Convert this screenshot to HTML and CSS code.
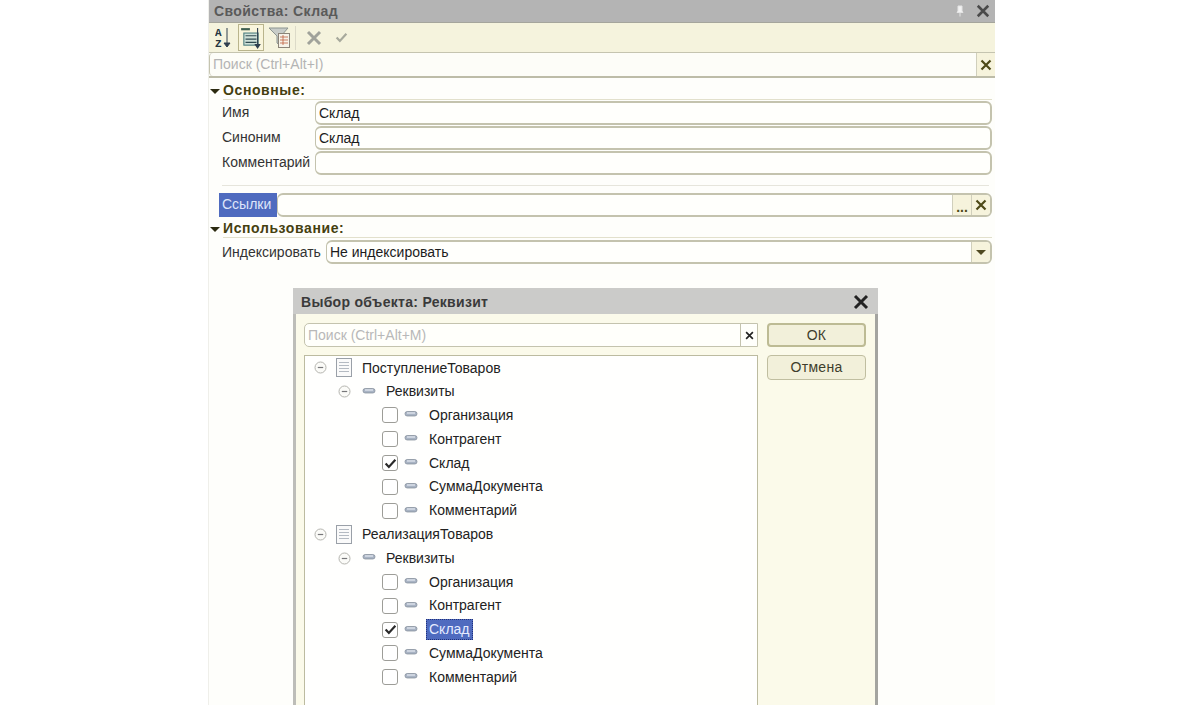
FILE: index.html
```html
<!DOCTYPE html>
<html lang="ru">
<head>
<meta charset="utf-8">
<title>Свойства: Склад</title>
<link rel="stylesheet" href="styles.css">
</head>
<body>
<svg class="defs" aria-hidden="true">
  <symbol id="x" viewBox="0 0 12 12"><path d="M1.5 1.5 10.5 10.5M10.5 1.5 1.5 10.5" fill="none" stroke="currentColor" stroke-width="2.2"/></symbol>
  <symbol id="attr" viewBox="0 0 14 8"><rect x="1" y="1.5" width="12" height="4.5" rx="2.2" fill="#a9b4c4" stroke="#7d8794" stroke-width=".7"/><rect x="3" y="2.4" width="8" height="1.2" fill="#e4e9f0"/></symbol>
  <symbol id="minus" viewBox="0 0 13 13"><circle cx="6.5" cy="6.5" r="5.5" fill="#fbfbf8" stroke="#b5b5b0"/><path d="M3.8 6.5h5.4" stroke="#77777a" stroke-width="1.2"/></symbol>
  <symbol id="doc" viewBox="0 0 18 19"><rect x="1.5" y=".5" width="15" height="18" fill="#fafafa" stroke="#9aa0a8"/><path d="M4 4.5h10M4 7.5h10M4 10.5h10M4 13.5h10" stroke="#b4bac2"/></symbol>
  <symbol id="tick" viewBox="0 0 12 10"><path d="M1.5 5 4.5 8.2 10.5 1.5" fill="none" stroke="currentColor" stroke-width="2"/></symbol>
</svg>

<main class="panel">
  <header class="panel-title">
    <span>Свойства: Склад</span>
    <span class="title-icons">
      <svg class="pin" viewBox="0 0 8 12"><path d="M2 1h4v5l1 1.500H1L2 6zM4 8v3.500" fill="#f2f2f2" stroke="#e4e4e4"/></svg>
      <svg class="title-x"><use href="#x"/></svg>
    </span>
  </header>

  <div class="toolbar">
    <button class="tool tool-az">
      <svg viewBox="0 0 18 22" width="18" height="22">
        <text x="0" y="9" class="az">A</text><text x="0" y="20" class="az">Z</text>
        <path d="M12 1v18M9 16l3 4 3-4z" fill="#2f3f4f" stroke="#2f3f4f"/>
      </svg>
    </button>
    <button class="tool tool-on">
      <svg viewBox="0 0 20 20" width="22" height="22">
        <path d="M1 2h8" stroke="#3f5f4f" stroke-width="2"/>
        <rect x="3.500" y="5.500" width="13" height="11" fill="#cfe0d8" stroke="#4f7f80"/>
        <path d="M5 8h10M5 11h10M5 14h10" stroke="#304a50"/>
        <path d="M16 1v17M14 16l2 3 2-3z" fill="#2f3f4f" stroke="#2f3f4f"/>
      </svg>
    </button>
    <button class="tool tool-filter">
      <svg viewBox="0 0 24 24" width="24" height="24">
        <path d="M1 2h19l-7 8v10l-4-3v-7z" fill="#c8ccc8" stroke="#8c9490"/>
        <rect x="10.500" y="7.500" width="11" height="14" fill="#f6f2e8" stroke="#8c8478"/>
        <path d="M12 11h8M12 14h8M12 17h8M15 9v10" stroke="#c06040" stroke-width=".8"/>
      </svg>
    </button>
    <i class="tool-sep"></i>
    <svg class="tool-x"><use href="#x"/></svg>
    <svg class="tool-tick"><use href="#tick"/></svg>
  </div>

  <div class="search">
    <span class="search-field">Поиск (Ctrl+Alt+I)</span>
    <span class="end-btn end-x"><svg><use href="#x"/></svg></span>
  </div>

  <div class="props">
    <h2 class="group"><i class="caret"></i><span>Основные:</span></h2>
    <div class="row"><label>Имя</label><span class="field">Склад</span></div>
    <div class="row"><label>Синоним</label><span class="field">Склад</span></div>
    <div class="row"><label>Комментарий</label><span class="field"></span></div>
    <hr class="rule">
    <div class="row row-link">
      <label class="picked">Ссылки</label>
      <span class="field field-btns">
        <span class="grow"></span>
        <span class="end-btn dots">...</span>
        <span class="end-btn end-x"><svg><use href="#x"/></svg></span>
      </span>
    </div>
    <h2 class="group group-use"><i class="caret"></i><span>Использование:</span></h2>
    <div class="row row-index">
      <label>Индексировать</label>
      <span class="field field-btns">
        <span class="grow">Не индексировать</span>
        <span class="end-btn"><i class="caret caret-btn"></i></span>
      </span>
    </div>
  </div>
</main>

<section class="dialog">
  <header class="dialog-title">
    <span>Выбор объекта: Реквизит</span>
    <svg class="dialog-x"><use href="#x"/></svg>
  </header>
  <div class="dialog-body">
    <div class="dialog-main">
      <div class="dialog-search">
        <span class="grow">Поиск (Ctrl+Alt+M)</span>
        <span class="search-x"><svg><use href="#x"/></svg></span>
      </div>
      <ul class="tree">
        <li class="lvl1"><svg class="ic-minus"><use href="#minus"/></svg><svg class="ic-doc"><use href="#doc"/></svg><span>ПоступлениеТоваров</span></li>
        <li class="lvl2"><svg class="ic-minus"><use href="#minus"/></svg><svg class="ic-attr"><use href="#attr"/></svg><span>Реквизиты</span></li>
        <li class="lvl3"><i class="check"></i><svg class="ic-attr"><use href="#attr"/></svg><span>Организация</span></li>
        <li class="lvl3"><i class="check"></i><svg class="ic-attr"><use href="#attr"/></svg><span>Контрагент</span></li>
        <li class="lvl3"><i class="check"><svg><use href="#tick"/></svg></i><svg class="ic-attr"><use href="#attr"/></svg><span>Склад</span></li>
        <li class="lvl3"><i class="check"></i><svg class="ic-attr"><use href="#attr"/></svg><span>СуммаДокумента</span></li>
        <li class="lvl3"><i class="check"></i><svg class="ic-attr"><use href="#attr"/></svg><span>Комментарий</span></li>
        <li class="lvl1"><svg class="ic-minus"><use href="#minus"/></svg><svg class="ic-doc"><use href="#doc"/></svg><span>РеализацияТоваров</span></li>
        <li class="lvl2"><svg class="ic-minus"><use href="#minus"/></svg><svg class="ic-attr"><use href="#attr"/></svg><span>Реквизиты</span></li>
        <li class="lvl3"><i class="check"></i><svg class="ic-attr"><use href="#attr"/></svg><span>Организация</span></li>
        <li class="lvl3"><i class="check"></i><svg class="ic-attr"><use href="#attr"/></svg><span>Контрагент</span></li>
        <li class="lvl3"><i class="check"><svg><use href="#tick"/></svg></i><svg class="ic-attr"><use href="#attr"/></svg><span class="sel">Склад</span></li>
        <li class="lvl3"><i class="check"></i><svg class="ic-attr"><use href="#attr"/></svg><span>СуммаДокумента</span></li>
        <li class="lvl3"><i class="check"></i><svg class="ic-attr"><use href="#attr"/></svg><span>Комментарий</span></li>
      </ul>
    </div>
    <div class="dialog-actions">
      <button class="btn btn-ok">ОК</button>
      <button class="btn">Отмена</button>
    </div>
  </div>
</section>
</body>
</html>
```

FILE: styles.css
```css
* { box-sizing: border-box; }
html, body { margin: 0; height: 705px; overflow: hidden; background: #fff; }
body {
  position: relative;
  font: 14px/1.2 "Liberation Sans", Arial, sans-serif;
  color: #2c2c2c;
  padding-left: 208px;
}
.defs { position: absolute; width: 0; height: 0; }
i { display: block; font-style: normal; }
button { font: inherit; padding: 0; border: 0; background: none; }

.panel {
  width: 787px;
  height: 705px;
  background: #fefefb;
  border-left: 1px solid #efefea;
  display: flex;
  flex-direction: column;
}
.panel-title {
  height: 23px;
  flex: none;
  background: #b4b4b4;
  border-bottom: 1px solid #a5a59c;
  color: #5a5a5a;
  font-weight: bold;
  letter-spacing: .4px;
  padding: 0 5px;
  display: flex;
  align-items: center;
  justify-content: space-between;
}
.title-icons { display: flex; align-items: center; gap: 12px; }
.pin { width: 8px; height: 12px; }
.title-x { width: 14px; height: 14px; color: #4a4a4a; }

.toolbar {
  height: 29px;
  flex: none;
  background: #f5f3dd;
  display: flex;
  align-items: center;
  padding-left: 4px;
}
.tool {
  width: 26px;
  height: 27px;
  display: flex;
  align-items: center;
  justify-content: center;
  border: 1px solid transparent;
  margin-right: 3px;
}
.tool-az { width: 22px; margin-right: 3px; }
.tool-on { border-color: #b9b48c; background: #f9f5dc; }
.tool-filter { margin-right: 2px; }
.az { font: bold 11px "Liberation Mono", monospace; fill: #26363f; }
.tool-sep { width: 1px; height: 24px; background: #dcdac8; }
.tool-x { width: 16px; height: 16px; color: #a0a29a; margin-left: 10px; }
.tool-tick { width: 13px; height: 11px; color: #a7a99c; margin-left: 13px; }

.search {
  height: 26px;
  flex: none;
  display: flex;
  background: #fdfdf8;
  border-top: 1px solid #c5c4b0;
  border-bottom: 2px solid #bdbca8;
}
.search-field {
  flex: 1;
  padding-left: 3px;
  line-height: 22px;
  color: #b4b4b4;
  border-left: 1px solid #c5c4b0;
  border-radius: 4px 0 0 4px;
}
.end-btn {
  width: 19px;
  flex: none;
  display: flex;
  align-items: center;
  justify-content: center;
  background: #f6f3dc;
  border-left: 1px solid #d0cfbc;
  color: #4e4a18;
}
.end-btn svg { width: 12px; height: 12px; }

.props { padding: 4px 3px 0 1px; flex: 1; }
.group {
  margin: 0;
  font-size: 14px;
  font-weight: bold;
  letter-spacing: .6px;
  color: #45400f;
  display: flex;
  align-items: center;
  gap: 3px;
  height: 18px;
}
.group span { flex: 1; border-bottom: 1px solid #e2e0cc; line-height: 17px; }
.caret {
  width: 0; height: 0;
  border: 5px solid transparent;
  border-top: 5px solid #2c2a10;
  border-bottom: 0;
  margin-top: 1px;
}
.caret-btn { border-top-color: #504a20; border-width: 5px 5px 0; }

.row {
  display: flex;
  align-items: center;
  height: 25px;
  padding-left: 12px;
}
.row label { width: 93px; flex: none; color: #333; }
.field {
  flex: 1;
  height: 24px;
  background: #fffffc;
  border: 1px solid #c4c3ae;
  border-width: 2px 2px 2px 1px;
  border-radius: 6px;
  padding-left: 3px;
  line-height: 21px;
  color: #1c1c1c;
  overflow: hidden;
}
.rule { height: 1px; border: 0; margin: 10px 3px 7px 12px; background: #e6e5dc; }
.row-link { padding-left: 9px; height: 24px; }
.row-link .picked {
  width: 58px;
  height: 24px;
  background: #4f6bbf;
  color: #dfe6fa;
  line-height: 22px;
  padding-left: 3px;
}
.field-btns { display: flex; padding: 0; }
.field-btns .grow { flex: 1; padding-left: 3px; }
.field-btns .end-btn { height: 20px; }
.dots { align-items: flex-end; font-weight: bold; line-height: 14px; padding-bottom: 1px; }
.group-use { margin-top: 3px; }
.row-index { margin-top: 1px; height: 26px; }
.row-index label { width: 104px; }

.dialog {
  position: absolute;
  left: 293px;
  top: 288px;
  width: 585px;
  height: 417px;
  background: #fbfaea;
  border-left: 3px solid #bdbdb8;
  border-right: 3px solid #a4a4a0;
  display: flex;
  flex-direction: column;
}
.dialog-title {
  height: 26px;
  flex: none;
  margin: 0 -3px;
  padding: 2px 9px 0 8px;
  background: #cbcbc9;
  color: #3a3a3a;
  font-weight: bold;
  letter-spacing: .3px;
  display: flex;
  align-items: center;
  justify-content: space-between;
}
.dialog-x { width: 16px; height: 16px; color: #222; }
.dialog-body { flex: 1; display: flex; padding: 9px 9px 0 8px; gap: 9px; min-height: 0; }
.dialog-main { width: 454px; display: flex; flex-direction: column; gap: 8px; }
.dialog-search {
  height: 24px;
  flex: none;
  display: flex;
  background: #fffffb;
  border: 1px solid #c4c3ae;
  border-radius: 5px 0 0 5px;
  line-height: 22px;
  color: #b8b8b8;
}
.dialog-search .grow { flex: 1; padding-left: 3px; }
.search-x {
  width: 17px;
  display: flex;
  align-items: center;
  justify-content: center;
  border-left: 1px solid #c4c3ae;
  color: #222;
}
.search-x svg { width: 9px; height: 9px; }

.tree {
  flex: 1;
  margin: 0;
  padding: 0;
  list-style: none;
  background: #fffffe;
  border: 1px solid #bcbba0;
  border-bottom: 0;
  color: #222;
}
.tree li { height: 23.8px; display: flex; align-items: center; }
.lvl1 { padding-left: 9px; }
.lvl2 { padding-left: 33px; }
.lvl3 { padding-left: 77px; }
.ic-minus { width: 13px; height: 13px; flex: none; }
.ic-doc { width: 18px; height: 19px; flex: none; margin: 0 9px 0 8px; }
.ic-attr { width: 14px; height: 8px; flex: none; }
.lvl2 .ic-attr { margin: -2px 10px 0 11px; }
.lvl3 .ic-attr { margin: -2px 11px 0 6px; }
.check {
  width: 16px;
  height: 16px;
  flex: none;
  background: #fff;
  border: 1px solid #9d9d98;
  border-radius: 3px;
  color: #2a2a2a;
  display: flex;
  align-items: center;
  justify-content: center;
}
.check svg { width: 13px; height: 11px; }
.sel {
  background: #4f6bbf;
  color: #e6ecff;
  outline: 1px dotted #20307a;
  outline-offset: -1px;
  padding: 2px 3px;
  margin-left: -3px;
}

.dialog-actions { width: 99px; display: flex; flex-direction: column; gap: 8px; }
.btn {
  height: 24px;
  background: #f2f0da;
  border: 1px solid #c0bea0;
  border-radius: 4px;
  color: #3e3e2c;
  letter-spacing: .3px;
}
.btn-ok { border-width: 2px; border-color: #bdbb94; }
.btn:last-child { height: 25px; }
```
